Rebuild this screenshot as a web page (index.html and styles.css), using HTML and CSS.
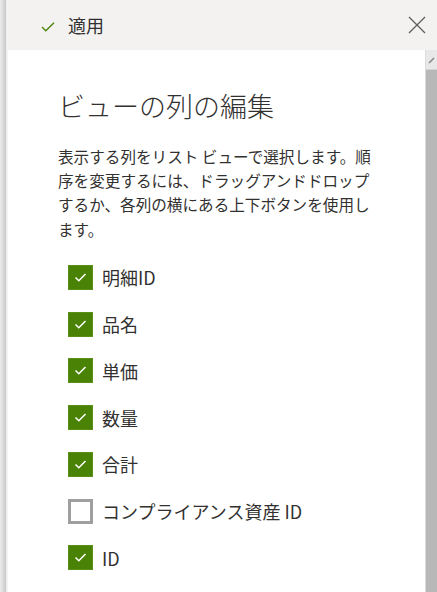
FILE: index.html
```html
<!DOCTYPE html>
<html lang="ja">
<head>
    <meta charset="UTF-8">
    <meta name="viewport" content="width=device-width, initial-scale=1.0">
    <title>ビューの列の編集</title>
    <link rel="stylesheet" href="styles.css">
</head>
<body>
    <div class="edge"></div>
    <div class="panel">
        <div class="header">
            <button class="apply">
                <svg class="apply-icon" width="14" height="10" viewBox="0 0 14 10">
                    <path d="M1 5 L4.8 8.8 L13 0.8" fill="none" stroke="#498205" stroke-width="1.3"/>
                </svg>
                <span>適用</span>
            </button>
            <button class="close">
                <svg width="18" height="18" viewBox="0 0 18 18">
                    <path d="M1 1 L17 17 M17 1 L1 17" stroke="#605e5c" stroke-width="1.3"/>
                </svg>
            </button>
        </div>
        <div class="main">
            <div class="content">
                <h1>ビューの列の編集</h1>
                <p class="desc">表示する列をリスト ビューで選択します。順序を変更するには、ドラッグアンドドロップするか、各列の横にある上下ボタンを使用します。</p>

                <div class="columns">
                    <label class="item"><span class="box checked"><svg width="25" height="25" viewBox="0 0 25 25"><path d="M7.5 12.5 L10.8 15.8 L17.5 9" fill="none" stroke="#fff" stroke-width="1.5"/></svg></span>明細ID</label>
                    <label class="item"><span class="box checked"><svg width="25" height="25" viewBox="0 0 25 25"><path d="M7.5 12.5 L10.8 15.8 L17.5 9" fill="none" stroke="#fff" stroke-width="1.5"/></svg></span>品名</label>
                    <label class="item"><span class="box checked"><svg width="25" height="25" viewBox="0 0 25 25"><path d="M7.5 12.5 L10.8 15.8 L17.5 9" fill="none" stroke="#fff" stroke-width="1.5"/></svg></span>単価</label>
                    <label class="item"><span class="box checked"><svg width="25" height="25" viewBox="0 0 25 25"><path d="M7.5 12.5 L10.8 15.8 L17.5 9" fill="none" stroke="#fff" stroke-width="1.5"/></svg></span>数量</label>
                    <label class="item"><span class="box checked"><svg width="25" height="25" viewBox="0 0 25 25"><path d="M7.5 12.5 L10.8 15.8 L17.5 9" fill="none" stroke="#fff" stroke-width="1.5"/></svg></span>合計</label>
                    <label class="item"><span class="box"></span>コンプライアンス資産 ID</label>
                    <label class="item"><span class="box checked"><svg width="25" height="25" viewBox="0 0 25 25"><path d="M7.5 12.5 L10.8 15.8 L17.5 9" fill="none" stroke="#fff" stroke-width="1.5"/></svg></span>ID</label>
                </div>
            </div>
            <div class="scrollbar">
                <div class="scroll-up">
                    <svg width="10" height="19" viewBox="0 0 10 19">
                        <path d="M3 13 L8 8" stroke="#8a8a8a" stroke-width="1.6"/>
                    </svg>
                </div>
                <div class="scroll-thumb"></div>
            </div>
        </div>
    </div>
</body>
</html>
```

FILE: styles.css
```css
body {
    font-family: "Noto Sans CJK JP", "Noto Sans", sans-serif;
    margin: 0;
    padding: 0;
    display: flex;
    height: 100vh;
    overflow: hidden;
    background-color: #ffffff;
    color: #323130;
}
.edge {
    width: 8px;
    flex-shrink: 0;
    background: linear-gradient(to right, #ececec 0, #d6d6d6 4px, #c6c6c6 6px, #efefef 6px, #f4f4f4 8px);
}
.panel {
    flex: 1;
    display: flex;
    flex-direction: column;
}
.header {
    height: 50px;
    flex-shrink: 0;
    background-color: #f3f2f1;
    display: flex;
    align-items: center;
    justify-content: space-between;
    padding: 0 11px 0 33px;
}
.apply {
    display: flex;
    align-items: center;
    gap: 13px;
    background: none;
    border: none;
    padding: 0;
    font-family: inherit;
    font-size: 18px;
    color: #323130;
}
.apply-icon {
    margin-top: 3px;
}
.close {
    background: none;
    border: none;
    padding: 0;
    display: flex;
}
.main {
    flex: 1;
    display: flex;
    min-height: 0;
}
.content {
    flex: 1;
    background-color: #ffffff;
    padding: 38px 0 0 50px;
}
h1 {
    margin: 0;
    font-size: 27px;
    font-weight: 300;
    line-height: 36px;
}
.desc {
    margin: 20px 0 0 0;
    width: 322px;
    font-size: 15.6px;
    line-height: 24.2px;
}
.columns {
    margin: 13px 0 0 10px;
    display: flex;
    flex-direction: column;
}
.item {
    height: 46.8px;
    display: flex;
    align-items: center;
    gap: 9px;
    font-size: 18px;
}
.box {
    width: 25px;
    height: 25px;
    box-sizing: border-box;
    border: 3px solid #a19f9d;
    display: flex;
}
.box.checked {
    border: none;
    background-color: #498205;
    box-shadow: inset 0 0 0 1px #5a9018;
}
.scrollbar {
    width: 11px;
    display: flex;
    flex-direction: column;
    border-left: 1px solid #dcdcdc;
    background-color: #e8e8e8;
}
.scroll-up {
    height: 19px;
    border-bottom: 1px solid #d4d4d4;
}
.scroll-thumb {
    flex: 1;
    background-color: #b8b8b8;
}
```
